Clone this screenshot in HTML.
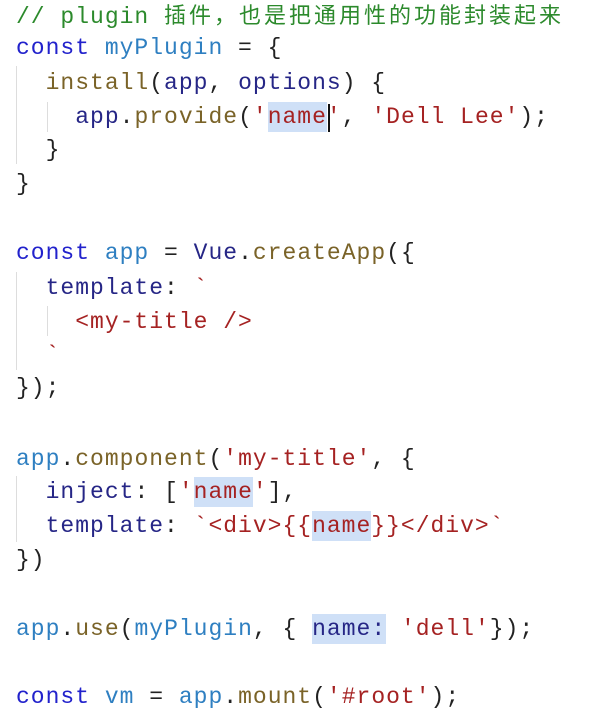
<!DOCTYPE html>
<html><head><meta charset="utf-8"><style>
body{margin:0;width:598px;height:710px;background:#fff;overflow:hidden;position:relative;font-family:"Liberation Mono","Noto Sans CJK SC",monospace;font-size:23px;letter-spacing:1px;}
.l{position:absolute;left:16px;white-space:pre;line-height:28px;color:#222;}
.c{color:#2c8a2c}.k{color:#2222cc}.b{color:#2e7fc1}.f{color:#7a6328}.n{color:#262686}.s{color:#a52222}
.h{background:#cfe0f7;padding:2px 0}
.g{position:absolute;width:1px;background:#ddd}
.cj{letter-spacing:3px;font-size:22px}
</style></head><body>
<div class="g" style="left:16px;top:66px;height:98px"></div>
<div class="g" style="left:47px;top:102px;height:30px"></div>
<div class="g" style="left:16px;top:272px;height:98px"></div>
<div class="g" style="left:47px;top:306px;height:30px"></div>
<div class="g" style="left:16px;top:476px;height:66px"></div>
<div class="l" style="top:3px"><span class="c">// plugin <span class="cj">插件，也是把通用性的功能封装起来</span></span></div>
<div class="l" style="top:34px"><span class="k">const</span> <span class="b">myPlugin</span> = {</div>
<div class="l" style="top:69px">  <span class="f">install</span>(<span class="n">app</span>, <span class="n">options</span>) {</div>
<div class="l" style="top:103px">    <span class="n">app</span>.<span class="f">provide</span>(<span class="s">'<span class="h">name</span>'</span>, <span class="s">'Dell Lee'</span>);</div>
<div style="position:absolute;left:328px;top:104px;width:2px;height:28px;background:#111"></div>
<div class="l" style="top:136px">  }</div>
<div class="l" style="top:170px">}</div>
<div class="l" style="top:239px"><span class="k">const</span> <span class="b">app</span> = <span class="n">Vue</span>.<span class="f">createApp</span>({</div>
<div class="l" style="top:274px">  <span class="n">template</span>: <span class="s">`</span></div>
<div class="l" style="top:308px">    <span class="s">&lt;my-title /&gt;</span></div>
<div class="l" style="top:341px">  <span class="s">`</span></div>
<div class="l" style="top:374px">});</div>
<div class="l" style="top:445px"><span class="b">app</span>.<span class="f">component</span>(<span class="s">'my-title'</span>, {</div>
<div class="l" style="top:478px">  <span class="n">inject</span>: [<span class="s">'<span class="h">name</span>'</span>],</div>
<div class="l" style="top:512px">  <span class="n">template</span>: <span class="s">`&lt;div&gt;{{<span class="h">name</span>}}&lt;/div&gt;`</span></div>
<div class="l" style="top:546px">})</div>
<div class="l" style="top:615px"><span class="b">app</span>.<span class="f">use</span>(<span class="b">myPlugin</span>, { <span class="n h">name:</span> <span class="s">'dell'</span>});</div>
<div class="l" style="top:683px"><span class="k">const</span> <span class="b">vm</span> = <span class="b">app</span>.<span class="f">mount</span>(<span class="s">'#root'</span>);</div>
</body></html>
